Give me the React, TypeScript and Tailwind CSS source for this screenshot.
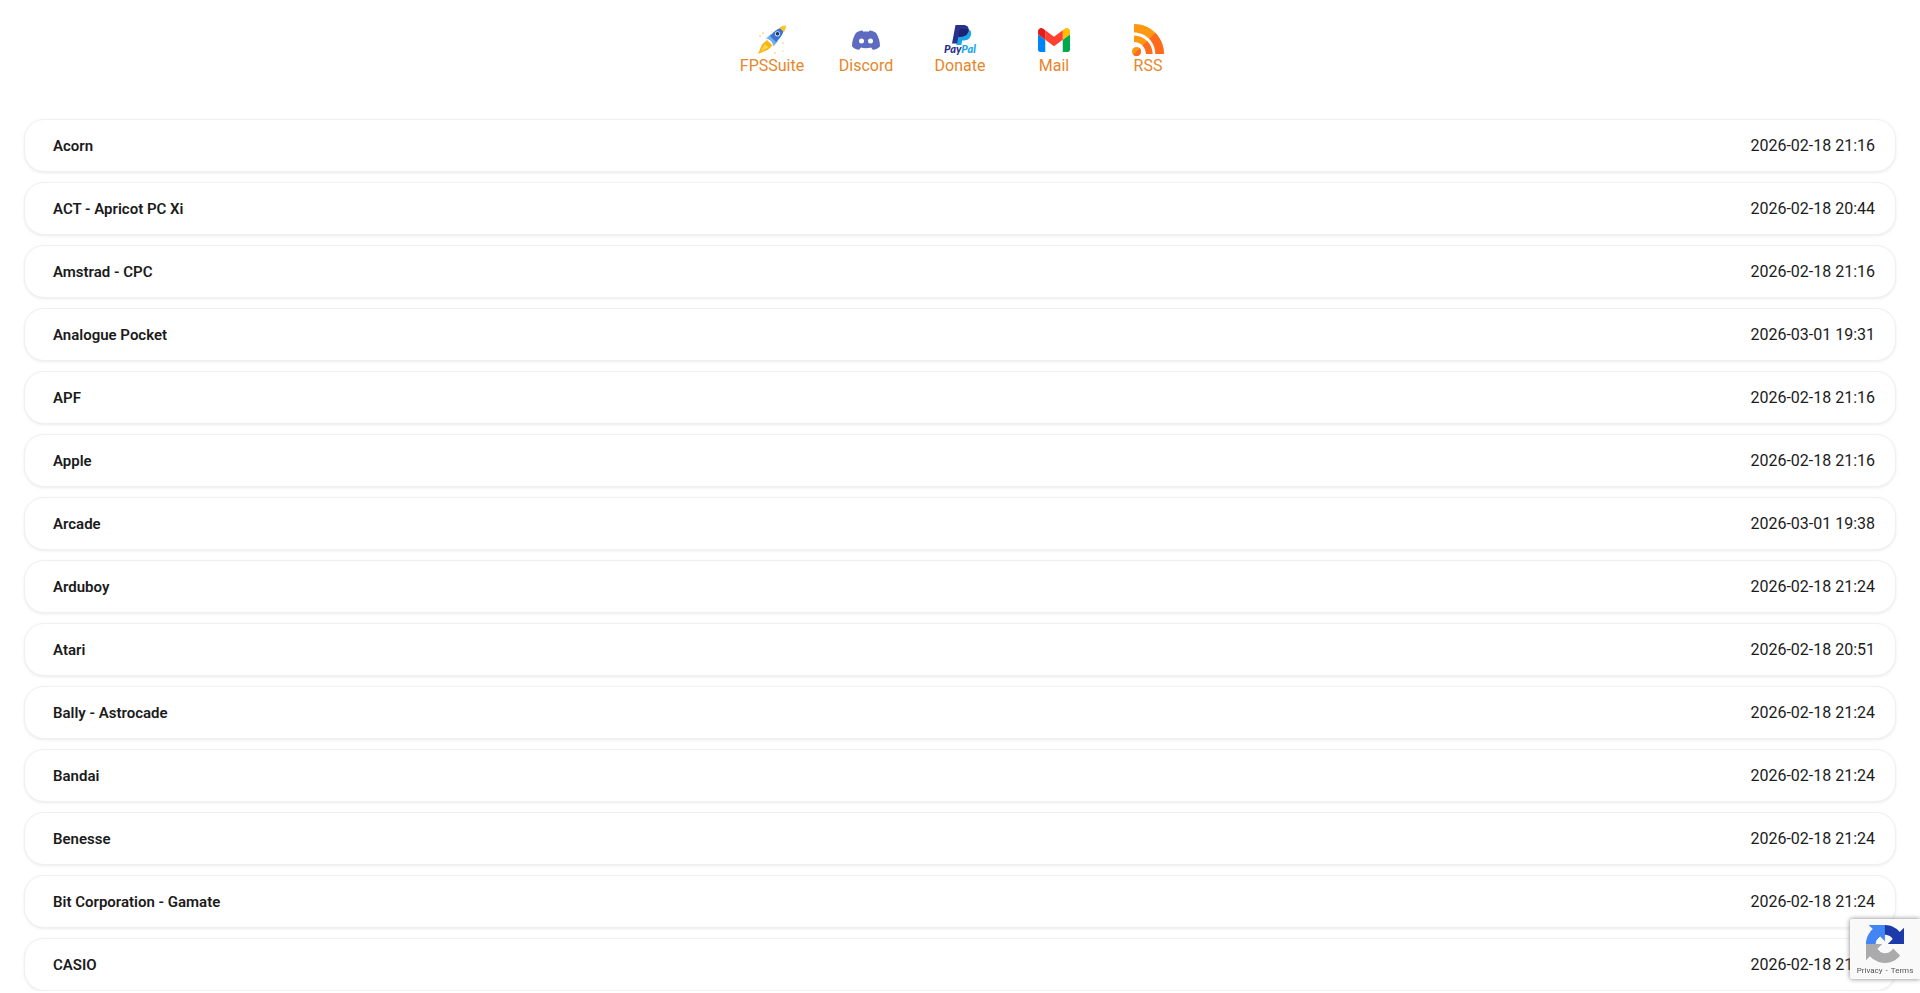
import React from 'react';

interface NavItem {
  label: string;
  href: string;
  icon: React.ReactNode;
}

interface Entry {
  name: string;
  date: string;
}

function RocketIcon() {
  return (
    <svg viewBox="0 0 32 32" className="h-8 w-8" aria-hidden="true">
      <path fill="#fbb417" d="M2 30 6 20.500 11 16l5.500 5.500-4.500 4.200z" />
      <path fill="#ffd54a" d="M4.500 27.500 9 20l3.500 3.500z" />
      <path fill="#7cc0ee" d="M15.500 9.500 10 14.500l4.500 1.500zM22.500 16.500 17.500 22.500l-1.500-4.500z" />
      <path fill="#3f72d0" d="M27.500 3.800c.8 5.600-3.500 11.200-9.500 16l-5.600-5.600C17 8.200 22 3.500 27.500 3.800" />
      <path fill="#6fb1ec" d="M12.400 14.200 14 12l6 6-2 1.800z" />
      <path fill="#fcc42c" d="M30 1.500c-2.300 0-4.800.8-6.500 2.200L27.800 8C29.300 6 30 3.800 30 1.500" />
      <circle cx="21.500" cy="9.800" r="2.600" fill="#cfe6f7" />
      <circle cx="21.500" cy="9.800" r="1.800" fill="#1f3460" />
      <g fill="#fbdc8c">
        <circle cx="7" cy="9" r="1" />
        <circle cx="4" cy="12" r="1" />
        <circle cx="16" cy="8" r=".8" />
        <circle cx="27" cy="19" r="1" />
        <circle cx="19" cy="29" r="1" />
        <circle cx="27" cy="27" r=".8" />
      </g>
    </svg>
  );
}

function DiscordIcon() {
  return (
    <svg viewBox="0 0 32 32" className="h-8 w-8" aria-hidden="true">
      <path
        fill="#5c6bc0"
        d="M12.500 6.500c-3 .2-5.500 1.500-6.800 2.800C3.300 13 2 17.600 2 22.300c1.700 2.200 4.300 3.300 7.200 3.500l1.700-2.200c3.300.9 6.900.9 10.200 0l1.700 2.200c2.900-.2 5.500-1.300 7.200-3.500 0-4.700-1.300-9.300-3.700-13-1.300-1.300-3.800-2.600-6.800-2.800l-.9 1.300c-1.700-.3-3.500-.3-5.200 0z"
      />
      <circle cx="11.500" cy="17" r="2.500" fill="#fff" />
      <circle cx="20.500" cy="17" r="2.500" fill="#fff" />
    </svg>
  );
}

function PaypalIcon() {
  return (
    <svg viewBox="0 0 32 32" className="h-8 w-8 overflow-visible" aria-hidden="true">
      <path fill="#1ba5e8" d="M14.500 5h8c3.700 0 5.200 2.600 4.500 5.800-.8 3.900-3.500 5.700-7.200 5.700h-1.600L17.300 21h-5z" />
      <path fill="#29308d" d="M11.500 1h7.800c4 0 6 2.200 5.200 5.800-.9 4-3.800 5.900-7.700 5.900h-2.500L13.100 19.500H8z" />
      <path fill="#1f2270" d="M16 5h6.500c.8 0 1.500.2 2.100.5.100.4 0 .8-.1 1.300-.9 4-3.800 5.900-7.700 5.900h-2.500z" />
      <text
        x="16"
        y="29"
        textAnchor="middle"
        fontSize="11"
        fontStyle="italic"
        fontWeight="900"
        fontFamily="Lato, sans-serif"
        fill="#29308d"
      >
        Pay<tspan fill="#1ba5e8">Pal</tspan>
      </text>
    </svg>
  );
}

function GmailIcon() {
  return (
    <svg viewBox="52 31 88 88" className="h-8 w-8" aria-hidden="true">
      <path fill="#0085f7" d="M58 108h14V74L52 59v43c0 3.320 2.690 6 6 6" />
      <path fill="#00a94b" d="M120 108h14c3.320 0 6-2.690 6-6V59l-20 15" />
      <path fill="#ffbc00" d="M120 48v26l20-15v-8c0-7.420-8.470-11.650-14.400-7.200" />
      <path fill="#ff4131" d="M72 74V48l24 18 24-18v26L96 92" />
      <path fill="#e51c19" d="M52 51v8l20 15V48l-5.600-4.200c-5.940-4.450-14.400-.220-14.400 7.200" />
    </svg>
  );
}

function RssIcon() {
  return (
    <svg viewBox="0 0 32 32" className="h-8 w-8" aria-hidden="true">
      <path fill="#ff9811" d="M2 0c16.600 0 30 13.400 30 30h-8.500C23.500 18.100 13.900 8.500 2 8.500z" />
      <path fill="#ff6a1f" d="M23.200 8.800C28.600 14.200 32 21.700 32 30h-8.500c0-5.900-2.400-11.300-6.300-15.200z" />
      <path fill="#ff9811" d="M2 11.500c10.200 0 18.500 8.300 18.500 18.500H14C14 23.400 8.600 18 2 18z" />
      <path fill="#ff6a1f" d="M15.100 16.900c3.300 3.400 5.400 8 5.400 13.100H14c0-3.300-1.300-6.300-3.500-8.500z" />
      <circle cx="4.500" cy="27.500" r="4.500" fill="#ff9811" />
      <path fill="#ff6a1f" d="M7.700 24.300a4.500 4.500 0 0 1-6.400 6.400z" />
    </svg>
  );
}

function RecaptchaLogo() {
  return (
    <svg viewBox="0 0 64 64" className="h-[38px] w-[38px]" aria-hidden="true">
      <path
        fill="#1c3aa9"
        d="M64 31.955l-.033-1.370V4.687l-7.160 7.160C50.948 4.674 42.033.093 32.050.093c-10.400 0-19.622 4.960-25.458 12.640l11.736 11.860a15.550 15.550 0 0 1 4.754-5.334c2.050-1.600 4.952-2.906 8.968-2.906.485 0 .86.057 1.135.163 4.976.393 9.288 3.140 11.828 7.124l-8.307 8.307L64 31.953"
      />
      <path
        fill="#4285f4"
        d="M31.862.094l-1.370.033H4.594l7.160 7.160C4.580 13.147 0 22.060 0 32.046c0 10.400 4.960 19.622 12.640 25.458L24.500 45.768a15.550 15.550 0 0 1-5.334-4.754c-1.600-2.050-2.906-4.952-2.906-8.968 0-.485.057-.86.163-1.135.393-4.976 3.140-9.288 7.124-11.828l8.307 8.307L31.860.095"
      />
      <path
        fill="#ababab"
        d="M.001 32.045l.033 1.370v25.898l7.160-7.160c5.860 7.173 14.774 11.754 24.760 11.754 10.400 0 19.622-4.960 25.458-12.640l-11.736-11.860a15.550 15.550 0 0 1-4.754 5.334c-2.050 1.600-4.952 2.906-8.968 2.906-.485 0-.86-.057-1.135-.163-4.976-.393-9.288-3.140-11.828-7.124l8.307-8.307c-10.522.040-22.400.066-27.295-.005"
      />
    </svg>
  );
}

const navItems: NavItem[] = [
  { label: 'FPSSuite', href: '#fpssuite', icon: <RocketIcon /> },
  { label: 'Discord', href: '#discord', icon: <DiscordIcon /> },
  { label: 'Donate', href: '#donate', icon: <PaypalIcon /> },
  { label: 'Mail', href: '#mail', icon: <GmailIcon /> },
  { label: 'RSS', href: '#rss', icon: <RssIcon /> },
];

const entries: Entry[] = [
  { name: 'Acorn', date: '2026-02-18 21:16' },
  { name: 'ACT - Apricot PC Xi', date: '2026-02-18 20:44' },
  { name: 'Amstrad - CPC', date: '2026-02-18 21:16' },
  { name: 'Analogue Pocket', date: '2026-03-01 19:31' },
  { name: 'APF', date: '2026-02-18 21:16' },
  { name: 'Apple', date: '2026-02-18 21:16' },
  { name: 'Arcade', date: '2026-03-01 19:38' },
  { name: 'Arduboy', date: '2026-02-18 21:24' },
  { name: 'Atari', date: '2026-02-18 20:51' },
  { name: 'Bally - Astrocade', date: '2026-02-18 21:24' },
  { name: 'Bandai', date: '2026-02-18 21:24' },
  { name: 'Benesse', date: '2026-02-18 21:24' },
  { name: 'Bit Corporation - Gamate', date: '2026-02-18 21:24' },
  { name: 'CASIO', date: '2026-02-18 21:24' },
];

function App() {
  return (
    <div className="bg-white px-6 pt-6 font-['Roboto',sans-serif] text-[#1b1b1b]">
      <nav className="mb-[43px] flex justify-center">
        {navItems.map((item) => (
          <a
            key={item.label}
            href={item.href}
            className="flex w-[94px] flex-col items-center text-base leading-5 text-[#e8862a] hover:underline"
          >
            {item.icon}
            {item.label}
          </a>
        ))}
      </nav>

      <ul className="flex flex-col gap-[10px]">
        {entries.map((entry) => (
          <li key={entry.name}>
            <a
              href="#"
              className="flex h-[53px] items-center justify-between rounded-[20px] border border-[#f0f0f0] bg-white pt-px pr-5 pl-7 shadow-[0_1px_3px_rgba(0,0,0,0.08)] hover:bg-gray-50"
            >
              <span className="text-[15px] leading-6 font-semibold">{entry.name}</span>
              <span className="text-base">{entry.date}</span>
            </a>
          </li>
        ))}
      </ul>

      <div className="fixed right-0 bottom-[14px] flex h-[60px] w-[70px] flex-col items-center rounded-l-xs bg-[#f9f9f9] pt-[6px] shadow-[0_0_5px_gray]">
        <RecaptchaLogo />
        <div className="flex gap-[3px] text-[8px] leading-4 text-[#555]">
          <a href="#privacy">Privacy</a>
          <span>-</span>
          <a href="#terms">Terms</a>
        </div>
      </div>
    </div>
  );
}

export default App;
